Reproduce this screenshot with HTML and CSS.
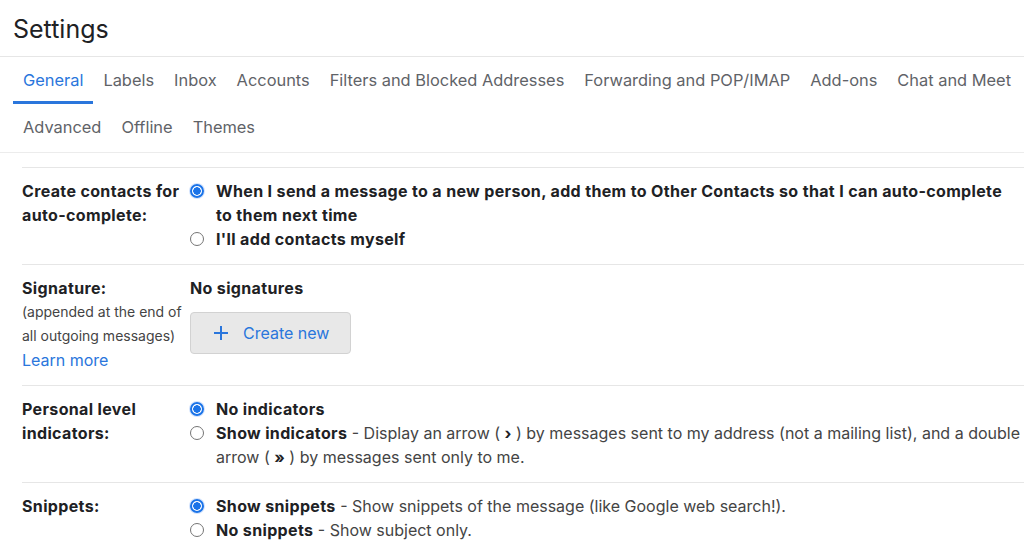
FILE: index.html
```html
<!DOCTYPE html>
<html>
<head>
<meta charset="utf-8">
<link rel="stylesheet" href="styles.css">
</head>
<body>
<header class="title">Settings</header>
<nav class="tabs">
  <a class="tab active">General</a>
  <a class="tab">Labels</a>
  <a class="tab">Inbox</a>
  <a class="tab">Accounts</a>
  <a class="tab">Filters and Blocked Addresses</a>
  <a class="tab">Forwarding and POP/IMAP</a>
  <a class="tab">Add-ons</a>
  <a class="tab">Chat and Meet</a>
  <a class="tab">Advanced</a>
  <a class="tab">Offline</a>
  <a class="tab">Themes</a>
</nav>
<main class="content">
  <section class="row">
    <div class="label">Create contacts for auto-complete:</div>
    <div class="value">
      <div class="opt"><span class="radio checked"></span><span class="otext"><b>When I send a message to a new person, add them to Other Contacts so that I can auto-complete to them next time</b></span></div>
      <div class="opt"><span class="radio"></span><span class="otext"><b>I'll add contacts myself</b></span></div>
    </div>
  </section>
  <section class="row">
    <div class="label">Signature:<div class="sub">(appended at the end of all outgoing messages)</div><a class="link">Learn more</a></div>
    <div class="value">
      <div class="strong">No signatures</div>
      <button class="btn"><svg class="plus" width="16" height="16" viewBox="0 0 16 16"><path d="M8 1v14M1 8h14" stroke="currentColor" stroke-width="2" fill="none"/></svg><span>Create new</span></button>
    </div>
  </section>
  <section class="row">
    <div class="label">Personal level indicators:</div>
    <div class="value">
      <div class="opt"><span class="radio checked"></span><span class="otext"><b>No indicators</b></span></div>
      <div class="opt"><span class="radio"></span><span class="otext"><b>Show indicators</b> - Display an arrow ( <span class="arr">›</span> ) by messages sent to my address (not a mailing list), and a double arrow ( <span class="arr">»</span> ) by messages sent only to me.</span></div>
    </div>
  </section>
  <section class="row">
    <div class="label">Snippets:</div>
    <div class="value">
      <div class="opt"><span class="radio checked"></span><span class="otext"><b>Show snippets</b> - Show snippets of the message (like Google web search!).</span></div>
      <div class="opt"><span class="radio"></span><span class="otext"><b>No snippets</b> - Show subject only.</span></div>
    </div>
  </section>
</main>
</body>
</html>
```
FILE: styles.css
```css
* { box-sizing: border-box; }
body {
  margin: 0;
  background: #fff;
  font-family: Inter, Roboto, "Noto Sans", Arial, sans-serif;
  color: #202124;
  overflow: hidden;
}
.title {
  height: 57px;
  padding: 13px 0 0 13px;
  font-size: 25px;
  line-height: 32px;
  color: #202124;
  border-bottom: 1px solid #e6e6e6;
}
.tabs {
  display: flex;
  flex-wrap: wrap;
  padding: 0 0 0 13px;
  border-bottom: 1px solid #ececec;
  width: 1024px;
}
.tab {
  display: block;
  height: 47px;
  line-height: 46px;
  padding: 0 10px;
  font-size: 16.4px;
  color: #5f6368;
  border-bottom: 3px solid transparent;
}
.tab:nth-child(n+9) { height: 48px; line-height: 47px; border-bottom: 0; }
.tab.active {
  color: #2a76dc;
  border-bottom-color: #2a76dc;
}
.content {
  padding: 14px 0 0 22px;
}
.row {
  display: flex;
  border-top: 1px solid #e6e6e6;
  padding: 11px 0 13px;
  font-size: 16px;
  line-height: 24px;
}
.label {
  width: 168px;
  flex: none;
  padding-right: 4px;
  font-weight: 700;
  letter-spacing: 0.35px;
  color: #202124;
}
.sub {
  font-weight: 400;
  font-size: 14px;
  letter-spacing: 0;
  color: #444;
}
.link {
  display: block;
  font-weight: 400;
  letter-spacing: 0;
  color: #2a76dc;
}
.value { flex: 1; padding-right: 4px; }
.opt { display: flex; align-items: flex-start; }
.otext { color: #444; }
.otext b, .strong { color: #202124; font-weight: 700; letter-spacing: 0.35px; }
.arr { color: #202124; font-weight: 700; }
.radio {
  flex: none;
  width: 14px;
  height: 14px;
  margin: 5px 12px 0 0;
  border-radius: 50%;
  border: 1px solid #757575;
  background: #fff;
}
.radio.checked {
  border: 2px solid #1a73e8;
  background: radial-gradient(circle, #1a73e8 0 3.5px, #fff 4px);
  box-shadow: 0 0 0 1px #d3e3fd;
}
.btn {
  display: flex;
  align-items: center;
  margin-top: 12px;
  width: 161px;
  height: 42px;
  padding: 0 0 0 22px;
  background: #e8e8e8;
  border: 1px solid #d2d2d2;
  border-radius: 4px;
  color: #2a76dc;
  font-family: inherit;
  font-size: 16px;
}
.plus { margin-right: 14px; }
```
